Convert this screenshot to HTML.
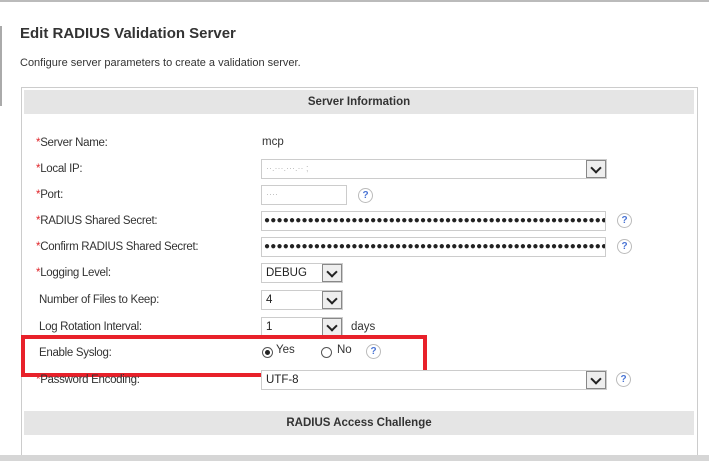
<!DOCTYPE html><html><head><style>
*{box-sizing:border-box;margin:0;padding:0}
body{width:709px;height:461px;background:#fff;position:relative;overflow:hidden;font-family:"Liberation Sans",Arial,sans-serif;color:#333}
.a{position:absolute}
.lbl{position:absolute;left:36px;font-size:11.5px;color:#333;letter-spacing:-0.3px}
.lbl b{color:#e0262b;font-weight:normal}
.in{position:absolute;left:261px;height:20px;border:1px solid #ccc;background:#fff;font-size:11.5px;padding:3px 4px;color:#222}
.dd{position:absolute;right:0;top:0;width:20px;height:18px;background:#eee;border:1px solid #888}
.dd:after{content:"";position:absolute;left:5px;top:3px;width:6px;height:6px;border-right:2px solid #222;border-bottom:2px solid #222;transform:rotate(45deg)}
.q{position:absolute;width:15px;height:15px;border:1px solid #bbb;border-radius:50%;font-size:10px;font-weight:bold;color:#4a74d4;text-align:center;line-height:13px}
.dots{font-size:10px;letter-spacing:0.2px;line-height:12px;overflow:hidden;white-space:nowrap;padding:3px 2px}
.hdr{position:absolute;left:24px;width:670px;height:24px;background:#e5e5e5;font-weight:bold;font-size:11.5px;text-align:center;line-height:24px;color:#333}
</style></head><body>
<div class="a" style="left:0;top:0;width:709px;height:2px;background:#bbb"></div>
<div class="a" style="left:0;top:26px;width:2px;height:80px;background:#aaa"></div>
<div class="a" style="left:20px;top:25px;font-size:15px;font-weight:bold;color:#333">Edit RADIUS Validation Server</div>
<div class="a" style="left:20px;top:57px;font-size:11px;color:#333">Configure server parameters to create a validation server.</div>
<div class="a" style="left:21px;top:87px;width:677px;height:372px;border:1px solid #ccc"></div>
<div class="hdr" style="top:90px">Server Information</div>
<div class="lbl" style="top:137px"><b>*</b>Server Name:</div>
<div class="a" style="left:262px;top:136px;font-size:11.5px">mcp</div>
<div class="lbl" style="top:163px"><b>*</b>Local IP:</div>
<div class="in" style="top:159px;width:346px;color:#bbb;font-size:9px">&#183;&#183;.&#183;&#183;&#183;.&#183;&#183;&#183;.&#183;&#183; ;<div class="dd"></div></div>
<div class="lbl" style="top:189px"><b>*</b>Port:</div>
<div class="in" style="top:185px;width:86px;color:#bbb;font-size:9px">&#183;&#183;&#183;&#183;</div>
<div class="q" style="left:358px;top:188px">?</div>
<div class="lbl" style="top:215px"><b>*</b>RADIUS Shared Secret:</div>
<div class="in dots" style="top:211px;width:345px">●●●●●●●●●●●●●●●●●●●●●●●●●●●●●●●●●●●●●●●●●●●●●●●●●●●●●●●●●●</div>
<div class="q" style="left:617px;top:213px">?</div>
<div class="lbl" style="top:241px"><b>*</b>Confirm RADIUS Shared Secret:</div>
<div class="in dots" style="top:237px;width:345px">●●●●●●●●●●●●●●●●●●●●●●●●●●●●●●●●●●●●●●●●●●●●●●●●●●●●●●●●●●</div>
<div class="q" style="left:617px;top:239px">?</div>
<div class="lbl" style="top:267px"><b>*</b>Logging Level:</div>
<div class="in" style="top:263px;width:82px">DEBUG<div class="dd"></div></div>
<div class="lbl" style="top:294px;left:39px">Number of Files to Keep:</div>
<div class="in" style="top:290px;width:82px">4<div class="dd"></div></div>
<div class="lbl" style="top:321px;left:39px">Log Rotation Interval:</div>
<div class="in" style="top:317px;width:82px">1<div class="dd"></div></div>
<div class="a" style="left:351px;top:321px;font-size:11.5px">days</div>
<div class="lbl" style="top:347px;left:39px">Enable Syslog:</div>
<div class="a" style="left:262px;top:347px;width:11px;height:11px;border:1px solid #555;border-radius:50%"><div style="position:absolute;left:2px;top:2px;width:5px;height:5px;background:#222;border-radius:50%"></div></div>
<div class="a" style="left:276px;top:344px;font-size:11.5px">Yes</div>
<div class="a" style="left:321px;top:347px;width:11px;height:11px;border:1px solid #555;border-radius:50%"></div>
<div class="a" style="left:337px;top:344px;font-size:11.5px">No</div>
<div class="q" style="left:366px;top:344px">?</div>
<div class="a" style="left:21px;top:335px;width:406px;height:42px;border:4px solid #e8212a"></div>
<div class="lbl" style="top:374px"><b>*</b>Password Encoding:</div>
<div class="in" style="top:370px;width:346px">UTF-8<div class="dd"></div></div>
<div class="q" style="left:616px;top:372px">?</div>
<div class="hdr" style="top:411px">RADIUS Access Challenge</div>
<div class="a" style="left:0;top:455px;width:709px;height:6px;background:#d6d6d6"></div>
</body></html>
